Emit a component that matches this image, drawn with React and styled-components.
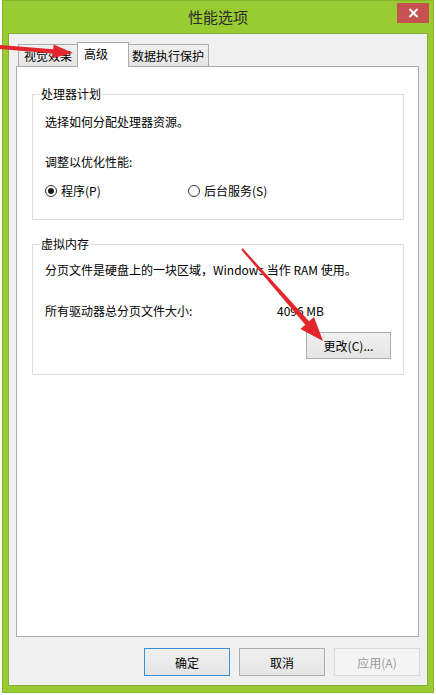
import React from "react";
import styled, { createGlobalStyle } from "styled-components";

const GlobalStyle = createGlobalStyle`
  html, body {
    margin: 0;
    padding: 0;
    background: #ffffff;
  }
  body {
    font-family: "Noto Sans CJK SC", "Noto Sans", sans-serif;
    font-size: 12px;
    color: #000;
  }
`;

export default function App() {
  return (
    <Page>
      <GlobalStyle />
      <Window>
        <TitleBar>
          <Title>性能选项</Title>
          <CloseButton aria-label="关闭">
            <svg width="11" height="10" viewBox="0 0 11 10">
              <path d="M1.5 1 L9.5 9 M9.5 1 L1.5 9" stroke="#fff" strokeWidth="2" fill="none" />
            </svg>
          </CloseButton>
        </TitleBar>

        <Client>
          <TabStrip>
            <Tab $w={60} $pl={5}>视觉效果</Tab>
            <Tab $w={52} $pl={6} $active>高级</Tab>
            <Tab $w={81} $pl={3}>数据执行保护</Tab>
          </TabStrip>

          <Panel>
            <Group $pt={12} $pb={20}>
              <Legend>处理器计划</Legend>
              <Line>选择如何分配处理器资源。</Line>
              <Line $mt={24}>调整以优化性能:</Line>
              <RadioRow>
                <RadioLabel>
                  <Radio $checked />
                  程序(P)
                </RadioLabel>
                <RadioLabel>
                  <Radio />
                  后台服务(S)
                </RadioLabel>
              </RadioRow>
            </Group>

            <Group $pt={10} $pb={15} $mt={16}>
              <Legend>虚拟内存</Legend>
              <Line>分页文件是硬盘上的一块区域，Windows 当作 RAM 使用。</Line>
              <SizeRow>
                <span>所有驱动器总分页文件大小:</span>
                <span>4096 MB</span>
              </SizeRow>
              <GroupActions>
                <Button $w={85} $h={27}>更改(C)...</Button>
              </GroupActions>
            </Group>
          </Panel>

          <DialogActions>
            <Button $w={86} $h={28} $primary>确定</Button>
            <Button $w={86} $h={28}>取消</Button>
            <Button $w={86} $h={28} disabled>应用(A)</Button>
          </DialogActions>
        </Client>
      </Window>

      <Annotations width="436" height="695" viewBox="0 0 436 695">
        <polygon
          fill="#e3262b"
          points="0,45 53.25,49.17 53.64,44.38 73,53 52.5,58.34 52.89,53.55 0,49"
        />
        <polygon
          fill="#e3262b"
          points="242.75,248.34 309.1,321.35 313.95,317.06 323,341 300.45,328.94 305.3,324.65 241.25,249.66"
        />
      </Annotations>
    </Page>
  );
}

const Page = styled.div`
  position: relative;
  width: 436px;
  height: 695px;
  padding-left: 2px;
  box-sizing: border-box;
  overflow: hidden;
`;

const Window = styled.div`
  width: 432px;
  height: 693px;
  background: #99cc33;
  box-shadow: inset 0 0 0 1px #86b52c;
  display: flex;
  flex-direction: column;
`;

const TitleBar = styled.div`
  height: 33px;
  flex: none;
  display: grid;
  grid-template-columns: 1fr auto 1fr;
`;

const Title = styled.div`
  grid-column: 2;
  align-self: center;
  font-size: 15px;
  line-height: 20px;
  color: #2b2b2b;
`;

const CloseButton = styled.div`
  grid-column: 3;
  justify-self: end;
  align-self: start;
  margin: 3px 5px 0 0;
  width: 32px;
  height: 20px;
  background: #c75050;
  display: flex;
  align-items: center;
  justify-content: center;
`;

const Client = styled.div`
  flex: 1;
  margin: 0 6px 7px;
  background: #f0f0f0;
  border: 1px solid #86ad3c;
  padding: 8px 8px 9px 7px;
  display: flex;
  flex-direction: column;
  min-height: 0;
`;

const TabStrip = styled.div`
  display: flex;
  align-items: flex-end;
  height: 25px;
  padding-left: 2px;
  margin-bottom: -1px;
  position: relative;
  z-index: 1;
`;

const Tab = styled.div`
  box-sizing: border-box;
  width: ${(p) => p.$w}px;
  height: ${(p) => (p.$active ? 25 : 23)}px;
  padding: 0 0 ${(p) => (p.$active ? 2 : 0)}px ${(p) => p.$pl}px;
  margin-left: ${(p) => (p.$active ? -1 : 0)}px;
  margin-right: ${(p) => (p.$active ? -1 : 0)}px;
  border: 1px solid #acacac;
  border-bottom: ${(p) => (p.$active ? "none" : "1px solid #acacac")};
  background: ${(p) => (p.$active ? "#ffffff" : "linear-gradient(#f0f0f0, #e5e5e5)")};
  display: flex;
  align-items: center;
  white-space: nowrap;
  line-height: 16px;
  position: relative;
  z-index: ${(p) => (p.$active ? 2 : 1)};
`;

const Panel = styled.div`
  flex: 1;
  background: #ffffff;
  border: 1px solid #acacac;
  padding: 19px 14px 0 15px;
  min-height: 0;
`;

const Group = styled.fieldset`
  margin: ${(p) => p.$mt || 0}px 0 0;
  border: 1px solid #dcdcdc;
  padding: ${(p) => p.$pt}px 12px ${(p) => p.$pb}px 12px;
  min-width: 0;
`;

const Legend = styled.legend`
  padding: 0 1px;
  margin-left: -5px;
  line-height: 16px;
`;

const Line = styled.div`
  line-height: 16px;
  margin-top: ${(p) => p.$mt || 0}px;
  white-space: nowrap;
`;

const RadioRow = styled.div`
  display: grid;
  grid-template-columns: 143px auto;
  margin-top: 13px;
  line-height: 16px;
`;

const RadioLabel = styled.label`
  display: flex;
  align-items: center;
  gap: 4px;
`;

const Radio = styled.span`
  box-sizing: border-box;
  width: 12px;
  height: 12px;
  border-radius: 50%;
  border: 1px solid #333;
  background: #fff;
  display: flex;
  align-items: center;
  justify-content: center;

  &::after {
    content: "";
    width: 6px;
    height: 6px;
    border-radius: 50%;
    background: ${(p) => (p.$checked ? "#1a1a1a" : "transparent")};
  }
`;

const SizeRow = styled.div`
  display: grid;
  grid-template-columns: 232px auto;
  margin-top: 25px;
  line-height: 16px;
`;

const GroupActions = styled.div`
  display: flex;
  justify-content: flex-end;
  margin-top: 13px;
`;

const DialogActions = styled.div`
  display: flex;
  justify-content: flex-end;
  gap: 9px;
  margin-top: 11px;
  margin-right: -1px;
`;

const Button = styled.button`
  box-sizing: border-box;
  width: ${(p) => p.$w}px;
  height: ${(p) => p.$h}px;
  padding: 0;
  font-family: inherit;
  font-size: 12px;
  color: #000;
  border: 1px solid ${(p) => (p.$primary ? "#3c8fd6" : "#acacac")};
  background: linear-gradient(#f0f0f0, #e5e5e5);
  border-radius: 0;

  &:disabled {
    border-color: #d9d9d9;
    background: #f4f4f4;
    color: #9a9a9a;
  }
`;

const Annotations = styled.svg`
  position: absolute;
  top: 0;
  left: 0;
  z-index: 10;
  pointer-events: none;
`;
